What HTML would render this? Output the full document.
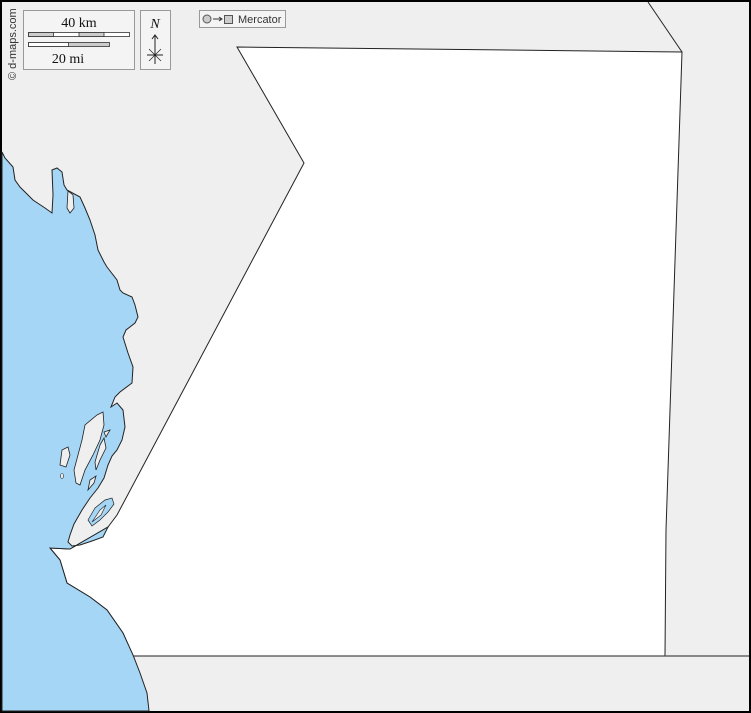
<!DOCTYPE html>
<html><head><style>
html,body{margin:0;padding:0;background:#000}
svg{display:block}
</style></head><body>
<svg width="751" height="713" viewBox="0 0 751 713" xmlns="http://www.w3.org/2000/svg" font-family="Liberation Serif, serif">
<rect x="0" y="0" width="751" height="713" fill="#000"/>
<rect x="2" y="2" width="747" height="709" fill="#efefef"/>
<polygon points="237,47 682,52 666,530 665,656 133,656 123,633 107,610 90,597 67,583 60,560 50,548 70,549 108,527 117,515 304,163" fill="#fff" stroke="#222" stroke-width="1"/>
<line x1="648" y1="2" x2="682" y2="52" stroke="#222" stroke-width="1"/>
<line x1="665" y1="656" x2="749" y2="656" stroke="#666" stroke-width="1.5"/>
<path d="M2,152 L5,158 L13,167 L15,180 L20,187 L33,200 L45,208 L52,213 L53,195 L52,170 L57,168 L62,172 L64,185 L67,190 L80,197 L85,208 L90,220 L95,235 L98,250 L104,262 L107,267 L117,280 L120,290 L123,293 L132,297 L135,305 L138,317 L135,323 L126,330 L123,337 L128,353 L133,367 L132,383 L120,392 L115,397 L111,407 L117,403 L123,410 L125,427 L122,440 L117,450 L112,456 L108,465 L104,478 L98,488 L90,498 L82,510 L74,524 L70,535 L68,542 L72,546 L80,545 L92,541 L103,537 L108,527 L70,549 L50,548 L60,560 L67,583 L90,597 L107,610 L123,633 L133,655 L140,673 L147,693 L149,711 L2,711 Z" fill="#a6d6f5" stroke="#222" stroke-width="1"/>
<!-- lagoon inside peninsula -->
<path d="M88,520 L95,508 L105,500 L112,498 L114,504 L108,512 L100,520 L92,526 Z" fill="#a6d6f5" stroke="#222" stroke-width="0.7"/>
<path d="M92,522 L100,510 L106,505 L101,515 Z" fill="#efefef" stroke="#222" stroke-width="0.6"/>
<path d="M68,191 L73,195 L74,208 L70,213 L67,208 Z" fill="#efefef" stroke="#222" stroke-width="0.8"/>
<path d="M97,415 L103,412 L104,425 L100,440 L93,455 L85,470 L80,485 L76,483 L74,470 L78,455 L82,440 L85,425 Z" fill="#efefef" stroke="#222" stroke-width="0.8"/>
<path d="M62,450 L68,447 L70,455 L66,467 L60,465 Z" fill="#efefef" stroke="#222" stroke-width="0.8"/>
<path d="M100,445 L104,438 L106,448 L100,460 L96,470 L95,462 Z" fill="#efefef" stroke="#222" stroke-width="0.8"/>
<path d="M104,432 L110,430 L106,437 Z" fill="#efefef" stroke="#222" stroke-width="0.8"/>
<path d="M90,480 L96,476 L94,483 L88,490 Z" fill="#efefef" stroke="#222" stroke-width="0.8"/>
<ellipse cx="62" cy="476" rx="1.5" ry="2.5" fill="#efefef" stroke="#222" stroke-width="0.6"/>
<rect x="23.5" y="10.5" width="111" height="59" fill="#f4f4f4" stroke="#999"/>
<text x="79" y="27" font-size="14" text-anchor="middle" fill="#111">40 km</text>
<rect x="28.5" y="32.5" width="101" height="4" fill="#fff" stroke="#333" stroke-width="0.8"/>
<rect x="28.5" y="32.5" width="25" height="4" fill="#ccc" stroke="#333" stroke-width="0.8"/>
<rect x="79" y="32.5" width="25" height="4" fill="#ccc" stroke="#333" stroke-width="0.8"/>
<rect x="28.5" y="42.5" width="81" height="4" fill="#ccc" stroke="#333" stroke-width="0.8"/>
<rect x="28.5" y="42.5" width="40" height="4" fill="#fff" stroke="#333" stroke-width="0.8"/>
<text x="68" y="63" font-size="14" text-anchor="middle" fill="#111">20 mi</text>
<rect x="140.5" y="10.5" width="30" height="59" fill="#f4f4f4" stroke="#999"/>
<text x="155" y="28" font-size="14" font-style="italic" text-anchor="middle" fill="#111">N</text>
<line x1="155" y1="35" x2="155" y2="64" stroke="#222"/>
<path d="M152,39 L155,35 L158,39" fill="none" stroke="#222"/>
<line x1="147" y1="55" x2="163" y2="55" stroke="#222"/>
<line x1="149" y1="49" x2="161" y2="61" stroke="#222" stroke-width="0.7"/>
<line x1="161" y1="49" x2="149" y2="61" stroke="#222" stroke-width="0.7"/>
<rect x="199.5" y="10.5" width="86" height="17" fill="#f4f4f4" stroke="#999"/>
<circle cx="207" cy="19" r="4" fill="#ccc" stroke="#555"/>
<line x1="213" y1="19" x2="221" y2="19" stroke="#333"/>
<path d="M219,17 L222,19 L219,21" fill="none" stroke="#333"/>
<rect x="224.5" y="15.5" width="8" height="8" fill="#ccc" stroke="#555"/>
<text x="238" y="23" font-size="11" fill="#333" font-family="Liberation Sans, sans-serif">Mercator</text>
<text transform="translate(16,80) rotate(-90)" font-size="11" fill="#333" font-family="Liberation Sans, sans-serif">© d-maps.com</text>
</svg>
</body></html>
